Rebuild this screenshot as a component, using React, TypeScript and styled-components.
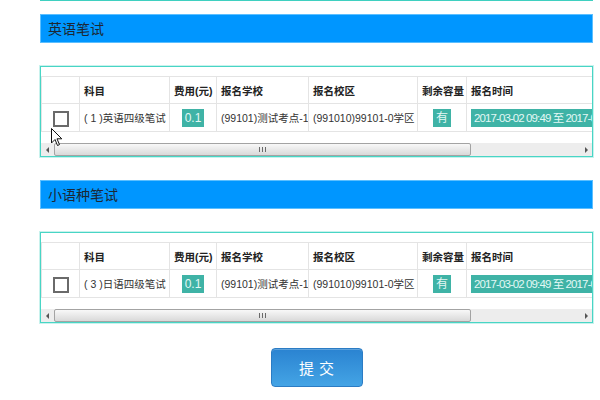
import styled, { createGlobalStyle } from "styled-components";

const GlobalStyle = createGlobalStyle`
  html, body {
    margin: 0;
    padding: 0;
    background: #ffffff;
  }
  body {
    font-family: "Liberation Sans", "Noto Sans CJK SC", sans-serif;
    color: #333333;
  }
`;

const Page = styled.div`
  width: 553px;
  margin-left: 40px;
  position: relative;
`;

const TopRule = styled.div`
  border-top: 1px solid #3fd0c0;
`;

const SectionTitle = styled.h3<{ $gap: number }>`
  margin: ${(p) => p.$gap}px 0 0;
  height: 29px;
  box-sizing: border-box;
  border: 1px solid #5cbfff;
  background: #0096ff;
  padding-left: 7px;
  font-family: "Noto Sans CJK SC", sans-serif;
  font-size: 14px;
  font-weight: 400;
  line-height: 27px;
  color: #1c2733;
`;

const TableBox = styled.div`
  position: relative;
  margin-top: 23px;
  border: 1px solid #48d5c5;
  box-shadow: 0 0 0 1px rgba(72, 213, 197, 0.3);
`;

const Scroller = styled.div`
  overflow: hidden;
  padding-top: 9px;
`;

const Table = styled.table`
  width: 675px;
  border-collapse: collapse;
  table-layout: fixed;
  font-size: 10.5px;
`;

const HeadCell = styled.th`
  box-sizing: border-box;
  height: 27px;
  padding: 0 0 0 4px;
  border: 1px solid #e4e4e4;
  text-align: left;
  font-weight: 700;
  color: #222222;
  white-space: nowrap;
  overflow: hidden;
`;

const Cell = styled.td<{ $align?: "left" | "center" }>`
  box-sizing: border-box;
  height: 28px;
  padding: ${(p) => (p.$align === "center" ? "0" : "0 0 0 4px")};
  border: 1px solid #e4e4e4;
  text-align: ${(p) => p.$align ?? "left"};
  color: #333333;
  white-space: nowrap;
  overflow: hidden;
`;

const Check = styled.input`
  appearance: none;
  margin: 2px 0 0 0;
  width: 16px;
  height: 16px;
  box-sizing: border-box;
  border: 2px solid #6a6a6a;
  background: #ffffff;
  vertical-align: middle;
`;

const Badge = styled.span<{ $wide?: boolean }>`
  display: inline-block;
  height: 18px;
  line-height: 18px;
  padding: 0 3px;
  background: #3fb3a6;
  color: #e3f8f5;
  font-size: ${(p) => (p.$wide ? 11.5 : 12)}px;
  vertical-align: middle;
  ${(p) => (p.$wide ? "width: 240px; letter-spacing: -0.9px;" : "")}
`;

const ScrollTrack = styled.div`
  margin-top: 11px;
  height: 13px;
  display: flex;
  align-items: center;
  background: #ededed;
`;

const ArrowBtn = styled.div<{ $dir: "left" | "right" }>`
  width: 12px;
  height: 13px;
  display: flex;
  align-items: center;
  justify-content: center;
  &::before {
    content: "";
    border-top: 3px solid transparent;
    border-bottom: 3px solid transparent;
    ${(p) =>
      p.$dir === "left"
        ? "border-right: 3px solid #555;"
        : "border-left: 3px solid #555;"}
  }
`;

const Thumb = styled.div`
  margin-left: 1px;
  width: 417px;
  height: 13px;
  box-sizing: border-box;
  border: 1px solid #a3a3a3;
  border-radius: 2px;
  background: linear-gradient(#f8f8f8, #d9d9d9);
  display: flex;
  align-items: center;
  justify-content: center;
  &::before {
    content: "";
    width: 7px;
    height: 5px;
    background: repeating-linear-gradient(
      90deg,
      #6a6a6a 0 1px,
      transparent 1px 3px
    );
  }
`;

const TrackRest = styled.div`
  flex: 1;
`;

const Pointer = styled.svg`
  position: absolute;
  left: 10px;
  top: 61px;
  pointer-events: none;
`;

const SubmitRow = styled.div`
  display: flex;
  justify-content: center;
  margin-top: 25px;
`;

const SubmitButton = styled.button`
  width: 92px;
  height: 39px;
  border: 1px solid #2b7cc4;
  border-radius: 4px;
  background: linear-gradient(#2a83d1, #44a4e5);
  box-shadow: inset 0 1px 0 rgba(255, 255, 255, 0.25);
  color: #ffffff;
  font-family: "Noto Sans CJK SC", sans-serif;
  font-size: 15px;
  letter-spacing: 5px;
  padding: 0 0 0 5px;
  cursor: pointer;
`;

const columns = [
  { label: "", w: 38 },
  { label: "科目", w: 90 },
  { label: "费用(元)", w: 47 },
  { label: "报名学校", w: 92 },
  { label: "报名校区", w: 109 },
  { label: "剩余容量", w: 49 },
  { label: "报名时间", w: 250 },
];

const sections = [
  { title: "英语笔试", subject: "( 1 )英语四级笔试", pointer: true },
  { title: "小语种笔试", subject: "( 3 )日语四级笔试", pointer: false },
];

const ExamSection = ({
  title,
  subject,
  pointer,
  gap,
}: {
  title: string;
  subject: string;
  pointer: boolean;
  gap: number;
}) => (
  <>
    <SectionTitle $gap={gap}>{title}</SectionTitle>
    <TableBox>
      <Scroller>
        <Table>
          <colgroup>
            {columns.map((c, i) => (
              <col key={i} style={{ width: c.w }} />
            ))}
          </colgroup>
          <thead>
            <tr>
              {columns.map((c, i) => (
                <HeadCell key={i}>{c.label}</HeadCell>
              ))}
            </tr>
          </thead>
          <tbody>
            <tr>
              <Cell $align="center">
                <Check type="checkbox" readOnly />
              </Cell>
              <Cell>{subject}</Cell>
              <Cell $align="center">
                <Badge>0.1</Badge>
              </Cell>
              <Cell>(99101)测试考点-1</Cell>
              <Cell>(991010)99101-0学区</Cell>
              <Cell $align="center">
                <Badge>有</Badge>
              </Cell>
              <Cell>
                <Badge $wide>2017-03-02 09:49 至 2017-03-31 17:00</Badge>
              </Cell>
            </tr>
          </tbody>
        </Table>
      </Scroller>
      <ScrollTrack>
        <ArrowBtn $dir="left" />
        <Thumb />
        <TrackRest />
        <ArrowBtn $dir="right" />
      </ScrollTrack>
      {pointer && (
        <Pointer width="12" height="19" viewBox="0 0 12 19">
          <path
            d="M0.5 0.5 L0.5 15 L4 11.5 L6.5 17.5 L8.5 16.6 L6 10.8 L10.8 10.8 Z"
            fill="#ffffff"
            stroke="#111111"
            strokeWidth="1"
          />
        </Pointer>
      )}
    </TableBox>
  </>
);

export default function App() {
  return (
    <Page>
      <GlobalStyle />
      <TopRule />
      {sections.map((s, i) => (
        <ExamSection
          key={s.title}
          title={s.title}
          subject={s.subject}
          pointer={s.pointer}
          gap={i === 0 ? 13 : 23}
        />
      ))}
      <SubmitRow>
        <SubmitButton type="button">提交</SubmitButton>
      </SubmitRow>
    </Page>
  );
}
